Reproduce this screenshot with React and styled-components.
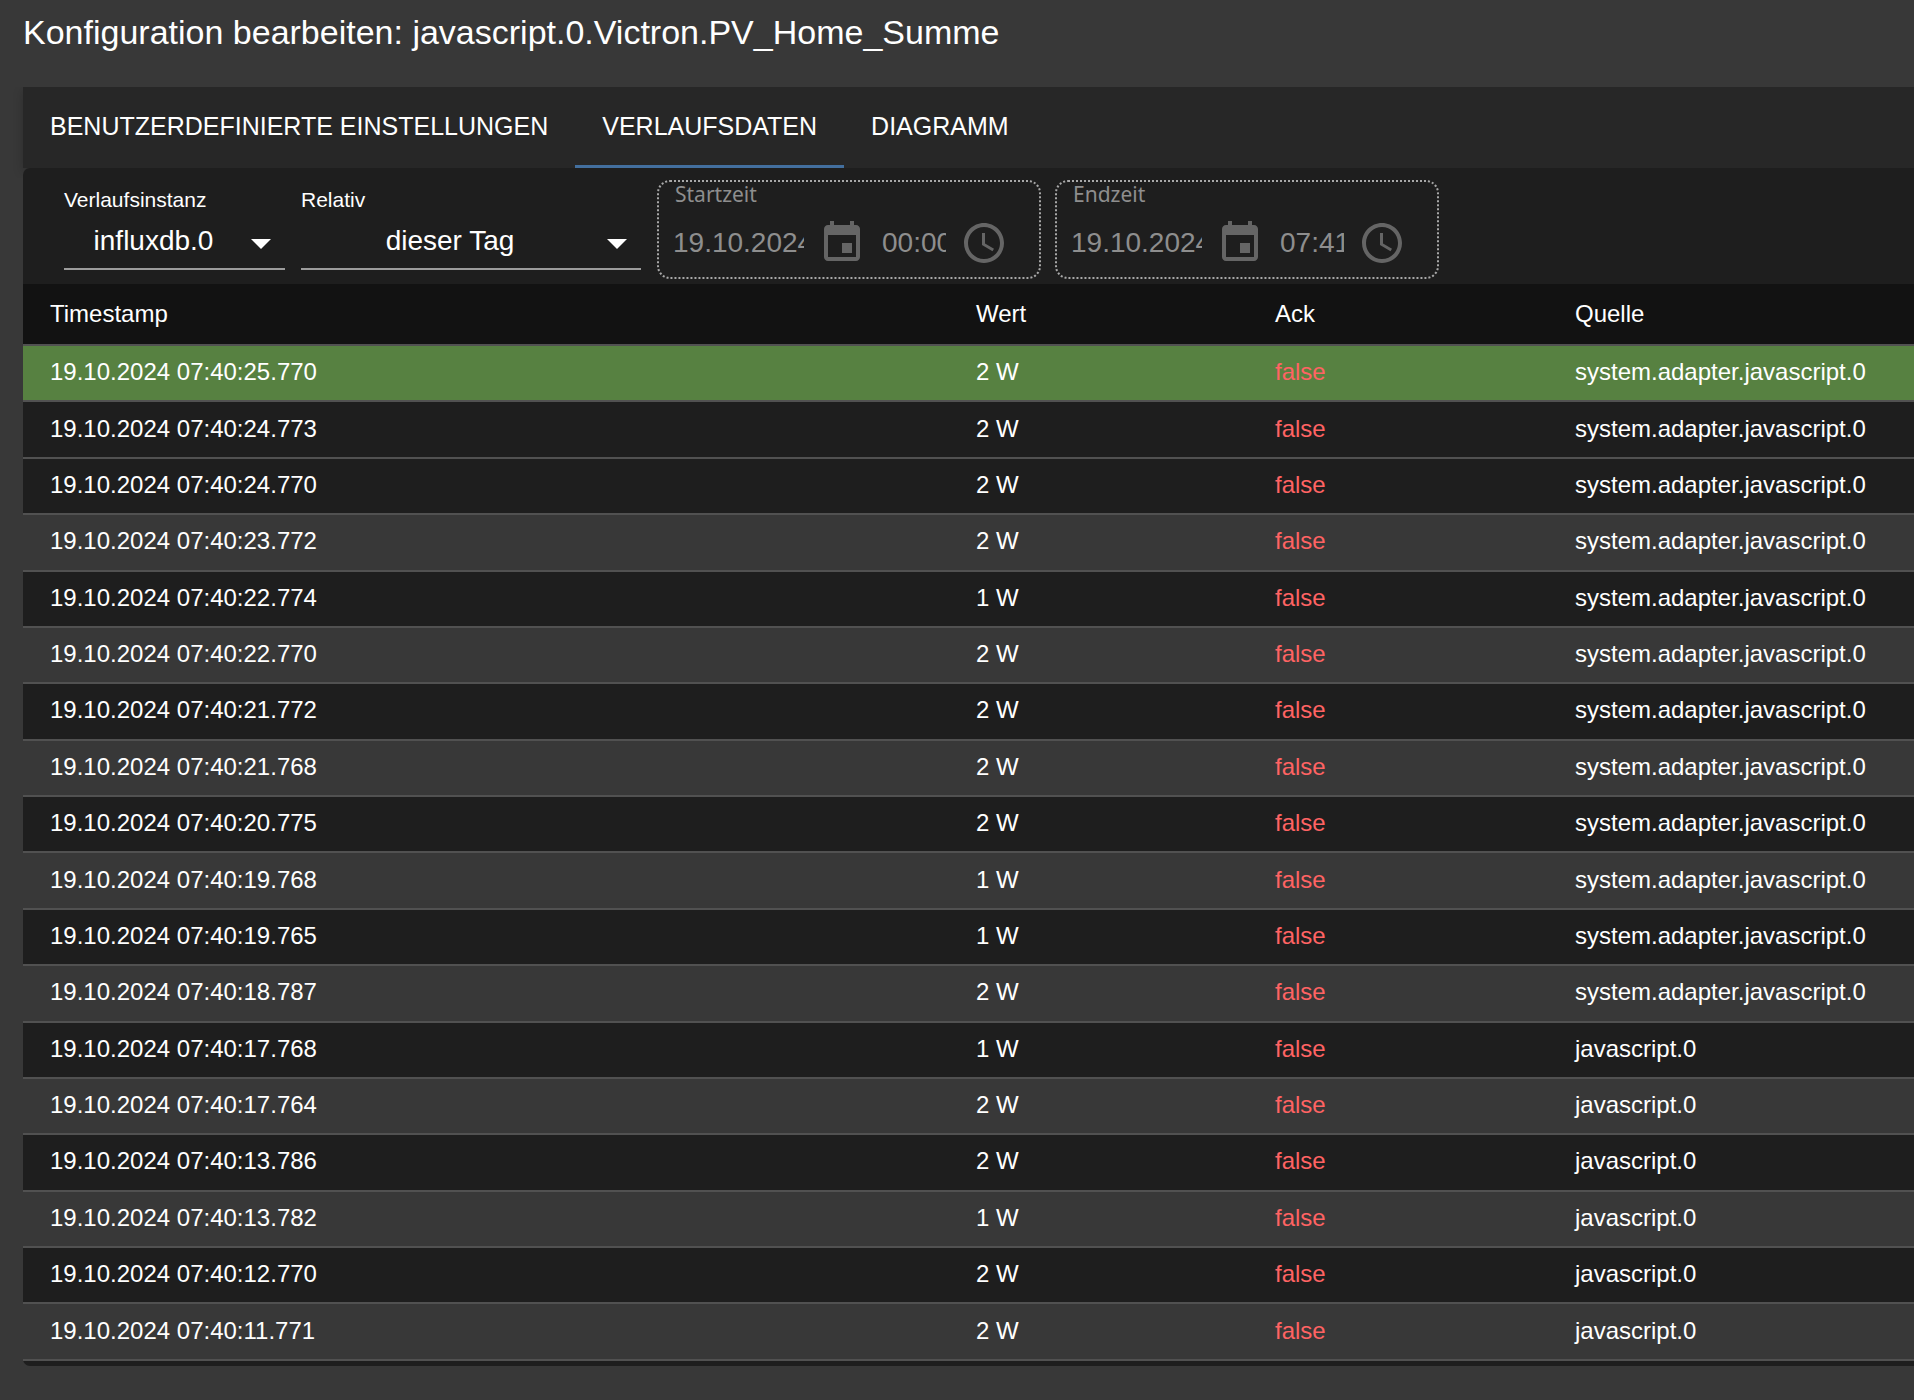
import React from "react";
import styled, { createGlobalStyle, css } from "styled-components";

const GlobalStyle = createGlobalStyle`
  * {
    box-sizing: border-box;
  }

  body {
    margin: 0;
    background: #383838;
    color: #fff;
    font-family: "Liberation Sans", Arial, Helvetica, sans-serif;
    font-size: 24px;
  }

  button,
  input,
  select {
    font-family: inherit;
    color: inherit;
  }
`;

const Page = styled.div`
  min-height: 100vh;
  display: flex;
  flex-direction: column;
  padding: 12px 0 34px 23px;
  overflow: hidden;
`;

const Title = styled.h1`
  margin: 0 0 35px;
  font-size: 34px;
  font-weight: 400;
  line-height: 40px;
`;

const TabBar = styled.div`
  display: flex;
  height: 81px;
  background: #272727;
  box-shadow: 0 4px 10px rgba(0, 0, 0, 0.2);
  clip-path: inset(0 0 -10px -16px);
`;

const Tab = styled.button`
  padding: 0 27px;
  border: 0;
  border-bottom: 3px solid ${(props) => (props.$active ? "#436f9e" : "transparent")};
  background: none;
  font-size: 25px;
  text-transform: uppercase;
  white-space: nowrap;
  cursor: pointer;
`;

const Panel = styled.main`
  position: relative;
  flex: 1;
  display: flex;
  flex-direction: column;
  padding-bottom: 5px;
  border-radius: 7px 0 0 7px;
  background: #1e1e1e;
`;

const Toolbar = styled.div`
  display: flex;
  align-items: flex-start;
  gap: 16px;
  padding: 12px 16px 5px 41px;
`;

const Field = styled.div`
  position: relative;
  flex: none;
  width: ${(props) => props.$width};
  padding-top: 8px;
`;

const FieldLabel = styled.label`
  display: block;
  font-size: 21px;
  line-height: 24px;
`;

const Select = styled.select`
  display: block;
  width: 100%;
  height: 58px;
  padding: 0 42px 0 0;
  border: 0;
  border-bottom: 2px solid #9c9c9c;
  border-radius: 0;
  background: none;
  font-size: 28px;
  text-align: center;
  text-align-last: center;
  appearance: none;
`;

const Arrow = styled.svg`
  position: absolute;
  right: 0;
  bottom: 3px;
  width: 48px;
  height: 48px;
  fill: #fff;
  pointer-events: none;
`;

const Times = styled.div`
  display: flex;
  gap: 14px;
`;

const TimeBox = styled.div`
  width: 384px;
  padding: 0 12px 10px;
  border: 2px dotted #a8a8a8;
  border-radius: 13px;
  color: #8e8e8e;
`;

const TimeLabel = styled.label`
  display: block;
  padding-left: 4px;
  margin-bottom: 13px;
  font-family: "Noto Sans", sans-serif;
  font-size: 21px;
  line-height: 24px;
`;

const TimeRow = styled.div`
  display: flex;
  align-items: center;
  gap: 14px;
`;

const TimeInput = styled.input`
  width: ${(props) => props.$width};
  height: 48px;
  padding: 0 0 0 2px;
  border: 0;
  background: none;
  font-size: 28px;
`;

const IconButton = styled.button`
  display: flex;
  padding: 0;
  border: 0;
  background: none;
  color: #656565;

  svg {
    width: 48px;
    height: 48px;
    fill: currentColor;
  }
`;

const TableWrap = styled.div`
  flex: 1;
  display: grid;
`;

const Table = styled.table`
  width: 100%;
  height: 100%;
  table-layout: fixed;
  border-collapse: separate;
  border-spacing: 0;
  line-height: 28px;
`;

const Col = styled.col`
  width: ${(props) => props.$width};
`;

const HeadCell = styled.th`
  height: 62px;
  padding: 0 0 0 27px;
  border-bottom: 2px solid #515151;
  background: #121212;
  font-weight: 400;
  text-align: left;
`;

const Row = styled.tr`
  background: #1e1e1e;

  &:nth-child(even):not(:nth-child(2)) {
    background: #383838;
  }

  ${(props) =>
    props.$current &&
    css`
      background: #578141;
    `}
`;

const Cell = styled.td`
  padding: 0 0 2px 27px;
  border-bottom: 2px solid #515151;
  color: ${(props) => (props.$ack === false ? "#ff6363" : "inherit")};
  white-space: nowrap;
`;

const tabs = ["Benutzerdefinierte Einstellungen", "Verlaufsdaten", "Diagramm"];

const ADAPTER = "system.adapter.javascript.0";
const SCRIPT = "javascript.0";

const rows = [
  { time: "07:40:25.770", value: 2, from: ADAPTER },
  { time: "07:40:24.773", value: 2, from: ADAPTER },
  { time: "07:40:24.770", value: 2, from: ADAPTER },
  { time: "07:40:23.772", value: 2, from: ADAPTER },
  { time: "07:40:22.774", value: 1, from: ADAPTER },
  { time: "07:40:22.770", value: 2, from: ADAPTER },
  { time: "07:40:21.772", value: 2, from: ADAPTER },
  { time: "07:40:21.768", value: 2, from: ADAPTER },
  { time: "07:40:20.775", value: 2, from: ADAPTER },
  { time: "07:40:19.768", value: 1, from: ADAPTER },
  { time: "07:40:19.765", value: 1, from: ADAPTER },
  { time: "07:40:18.787", value: 2, from: ADAPTER },
  { time: "07:40:17.768", value: 1, from: SCRIPT },
  { time: "07:40:17.764", value: 2, from: SCRIPT },
  { time: "07:40:13.786", value: 2, from: SCRIPT },
  { time: "07:40:13.782", value: 1, from: SCRIPT },
  { time: "07:40:12.770", value: 2, from: SCRIPT },
  { time: "07:40:11.771", value: 2, from: SCRIPT },
];

const SelectField = ({ id, label, value, width }) => (
  <Field $width={width}>
    <FieldLabel htmlFor={id}>{label}</FieldLabel>
    <Select id={id} defaultValue={value}>
      <option value={value}>{value}</option>
    </Select>
    <Arrow viewBox="0 0 24 24" aria-hidden="true">
      <path d="M7 10l5 5 5-5z" />
    </Arrow>
  </Field>
);

const TimeField = ({ id, label, date, time }) => (
  <TimeBox>
    <TimeLabel htmlFor={id}>{label}</TimeLabel>
    <TimeRow>
      <TimeInput id={id} $width="133px" value={date} readOnly />
      <IconButton type="button" aria-label={`${label} Datum`}>
        <svg viewBox="0 0 24 24">
          <path d="M17 12h-5v5h5v-5zM16 1v2H8V1H6v2H5c-1.11 0-1.99.9-1.99 2L3 19c0 1.1.89 2 2 2h14c1.1 0 2-.9 2-2V5c0-1.1-.9-2-2-2h-1V1h-2zm3 18H5V8h14v11z" />
        </svg>
      </IconButton>
      <TimeInput $width="66px" aria-label={`${label} Uhrzeit`} value={time} readOnly />
      <IconButton type="button" aria-label={`${label} Uhrzeit`}>
        <svg viewBox="0 0 24 24">
          <path d="M11.99 2C6.47 2 2 6.48 2 12s4.47 10 9.99 10C17.52 22 22 17.52 22 12S17.52 2 11.99 2zM12 20c-4.42 0-8-3.58-8-8s3.58-8 8-8 8 3.58 8 8-3.58 8-8 8z" />
          <path d="M12.5 7H11v6l5.25 3.15.75-1.23-4.5-2.67z" />
        </svg>
      </IconButton>
    </TimeRow>
  </TimeBox>
);

const HistoryTable = () => (
  <TableWrap>
    <Table>
      <colgroup>
        <Col />
        <Col $width="299px" />
        <Col $width="300px" />
        <Col $width="366px" />
      </colgroup>
      <thead>
        <tr>
          <HeadCell>Timestamp</HeadCell>
          <HeadCell>Wert</HeadCell>
          <HeadCell>Ack</HeadCell>
          <HeadCell>Quelle</HeadCell>
        </tr>
      </thead>
      <tbody>
        {rows.map((row, index) => (
          <Row key={row.time} $current={index === 0}>
            <Cell>{`19.10.2024 ${row.time}`}</Cell>
            <Cell>{`${row.value} W`}</Cell>
            <Cell $ack={false}>false</Cell>
            <Cell>{row.from}</Cell>
          </Row>
        ))}
      </tbody>
    </Table>
  </TableWrap>
);

const App = () => {
  return (
    <>
      <GlobalStyle />
      <Page>
        <Title>Konfiguration bearbeiten: javascript.0.Victron.PV_Home_Summe</Title>
        <TabBar role="tablist">
          {tabs.map((tab) => (
            <Tab
              key={tab}
              type="button"
              role="tab"
              aria-selected={tab === "Verlaufsdaten"}
              $active={tab === "Verlaufsdaten"}
            >
              {tab}
            </Tab>
          ))}
        </TabBar>
        <Panel>
          <Toolbar>
            <SelectField id="instance" label="Verlaufsinstanz" value="influxdb.0" width="221px" />
            <SelectField id="relative" label="Relativ" value="dieser Tag" width="340px" />
            <Times>
              <TimeField id="start" label="Startzeit" date="19.10.2024" time="00:00:00" />
              <TimeField id="end" label="Endzeit" date="19.10.2024" time="07:41:00" />
            </Times>
          </Toolbar>
          <HistoryTable />
        </Panel>
      </Page>
    </>
  );
};

export default App;
